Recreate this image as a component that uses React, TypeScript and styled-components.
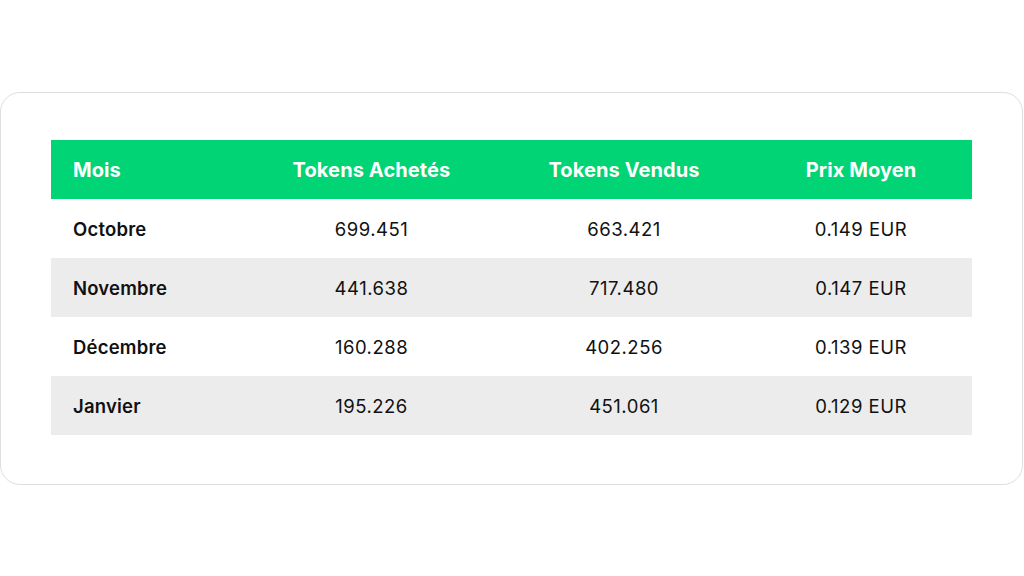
import React from "react"
import styled, { createGlobalStyle } from "styled-components"

interface Row {
  month: string
  bought: string
  sold: string
  price: string
}

const rows: Row[] = [
  { month: "Octobre", bought: "699.451", sold: "663.421", price: "0.149 EUR" },
  { month: "Novembre", bought: "441.638", sold: "717.480", price: "0.147 EUR" },
  { month: "Décembre", bought: "160.288", sold: "402.256", price: "0.139 EUR" },
  { month: "Janvier", bought: "195.226", sold: "451.061", price: "0.129 EUR" },
]

const App = () => {
  return (
    <>
      <GlobalStyle />
      <Page>
        <Card>
          <Table>
            <colgroup>
              <col style={{ width: 194 }} />
              <col style={{ width: 253 }} />
              <col style={{ width: 252 }} />
              <col style={{ width: 222 }} />
            </colgroup>
            <thead>
              <tr>
                <HeadCell align="left">Mois</HeadCell>
                <HeadCell>Tokens Achetés</HeadCell>
                <HeadCell>Tokens Vendus</HeadCell>
                <HeadCell>Prix Moyen</HeadCell>
              </tr>
            </thead>
            <tbody>
              {rows.map((row, i) => (
                <BodyRow key={row.month} striped={i % 2 === 1}>
                  <MonthCell>{row.month}</MonthCell>
                  <Cell>{row.bought}</Cell>
                  <Cell>{row.sold}</Cell>
                  <Cell>{row.price}</Cell>
                </BodyRow>
              ))}
            </tbody>
          </Table>
        </Card>
      </Page>
    </>
  )
}

export default App

const GlobalStyle = createGlobalStyle`
  html, body {
    margin: 0;
    padding: 0;
    background: #ffffff;
    font-family: Inter, "Noto Sans", sans-serif;
  }
`

const Page = styled.div`
  width: 1024px;
  height: 576px;
  padding-top: 92px;
  box-sizing: border-box;
`

const Card = styled.div`
  margin: 0 1px 0 0;
  height: 393px;
  box-sizing: border-box;
  border: 1px solid #dedede;
  border-radius: 20px;
  padding: 47px 50px 0 50px;
`

const Table = styled.table`
  width: 921px;
  border-collapse: collapse;
  table-layout: fixed;
`

interface HeadCellProps {
  align?: "left" | "center"
}
const HeadCell = styled.th<HeadCellProps>`
  height: 58px;
  padding: 1px 22px 0;
  background: #00d474;
  color: #ffffff;
  font-size: 20px;
  font-weight: 700;
  letter-spacing: 0.1px;
  text-align: ${props => props.align ?? "center"};
`

interface BodyRowProps {
  striped: boolean
}
const BodyRow = styled.tr<BodyRowProps>`
  height: 59px;
  background: ${props => (props.striped ? "#ececec" : "#ffffff")};
`

const Cell = styled.td`
  padding: 1px 22px 0;
  font-size: 18.5px;
  letter-spacing: 0.5px;
  color: #111111;
  text-align: center;
`

const MonthCell = styled(Cell)`
  text-align: left;
  font-weight: 600;
  letter-spacing: 0.2px;
`
